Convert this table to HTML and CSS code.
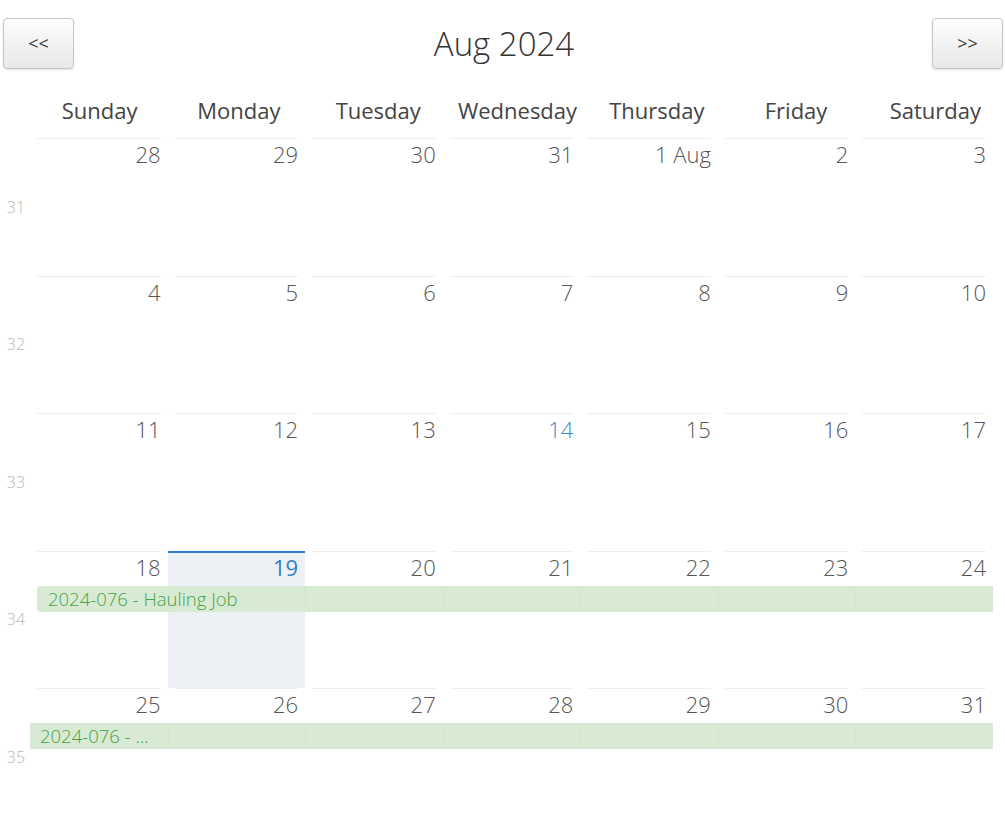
FILE: index.html
```html
<!DOCTYPE html>
<html lang="en">
<head>
<meta charset="utf-8">
<title>Aug 2024</title>
<link rel="stylesheet" href="styles.css">
</head>
<body>
<div class="toolbar">
  <button class="nav-btn">&lt;&lt;</button>
  <h1 class="title">Aug 2024</h1>
  <button class="nav-btn">&gt;&gt;</button>
</div>
<div class="dow">
  <div></div>
  <div>Sunday</div><div>Monday</div><div>Tuesday</div><div>Wednesday</div><div>Thursday</div><div>Friday</div><div>Saturday</div>
</div>
<div class="calendar">
  <div class="week">
    <div class="wk">31</div>
    <div class="day"><div class="num">28</div></div>
    <div class="day"><div class="num">29</div></div>
    <div class="day"><div class="num">30</div></div>
    <div class="day"><div class="num">31</div></div>
    <div class="day"><div class="num">1 Aug</div></div>
    <div class="day"><div class="num">2</div></div>
    <div class="day"><div class="num">3</div></div>
  </div>

  <div class="week">
    <div class="wk">32</div>
    <div class="day"><div class="num">4</div></div>
    <div class="day"><div class="num">5</div></div>
    <div class="day"><div class="num">6</div></div>
    <div class="day"><div class="num">7</div></div>
    <div class="day"><div class="num">8</div></div>
    <div class="day"><div class="num">9</div></div>
    <div class="day"><div class="num">10</div></div>
  </div>

  <div class="week">
    <div class="wk">33</div>
    <div class="day"><div class="num">11</div></div>
    <div class="day"><div class="num">12</div></div>
    <div class="day"><div class="num">13</div></div>
    <div class="day"><div class="num today">14</div></div>
    <div class="day"><div class="num">15</div></div>
    <div class="day"><div class="num">16</div></div>
    <div class="day"><div class="num">17</div></div>
  </div>

  <div class="week">
    <div class="wk">34</div>
    <div class="day"><div class="num">18</div></div>
    <div class="day selected"><div class="num">19</div></div>
    <div class="day"><div class="num">20</div></div>
    <div class="day"><div class="num">21</div></div>
    <div class="day"><div class="num">22</div></div>
    <div class="day"><div class="num">23</div></div>
    <div class="day"><div class="num">24</div></div>
    <div class="event">
      <div class="seg start"></div><div class="seg"></div><div class="seg"></div><div class="seg"></div><div class="seg"></div><div class="seg"></div><div class="seg"></div>
      <div class="label label-start">2024-076 - Hauling Job</div>
    </div>
  </div>

  <div class="week">
    <div class="wk">35</div>
    <div class="day"><div class="num">25</div></div>
    <div class="day"><div class="num">26</div></div>
    <div class="day"><div class="num">27</div></div>
    <div class="day"><div class="num">28</div></div>
    <div class="day"><div class="num">29</div></div>
    <div class="day"><div class="num">30</div></div>
    <div class="day"><div class="num">31</div></div>
    <div class="event">
      <div class="seg"></div><div class="seg"></div><div class="seg"></div><div class="seg"></div><div class="seg"></div><div class="seg"></div><div class="seg"></div>
      <div class="label label-cont">2024-076 - ...</div>
    </div>
  </div>
</div>
</body>
</html>
```

FILE: styles.css
```css
html, body {
  margin: 0;
  padding: 0;
  background: #fff;
}
body {
  font-family: "Open Sans", "Liberation Sans", sans-serif;
  color: #333;
  width: 1005px;
}
.toolbar {
  display: flex;
  align-items: center;
  justify-content: space-between;
  padding: 18px 2px 0 3px;
  height: 50px;
}
.nav-btn {
  width: 71px;
  height: 51px;
  font-family: "Open Sans", "Liberation Sans", sans-serif;
  font-size: 18px;
  color: #333;
  background: linear-gradient(#fdfdfd, #e8e8e8);
  border: 1px solid #c6c6c6;
  border-radius: 4px;
  box-shadow: 0 1px 2px rgba(0, 0, 0, 0.12);
  padding: 0;
}
.title {
  margin: 0;
  font-size: 33px;
  font-weight: 300;
  color: #333;
  padding-left: 2px;
}
.dow {
  display: grid;
  grid-template-columns: 30px repeat(7, 1fr);
  width: 1005px;
  height: 70px;
  box-sizing: border-box;
  align-items: end;
  padding-bottom: 13px;
  font-size: 22px;
  color: #444;
  text-align: center;
}
.calendar {
  width: 993px;
}
.week {
  display: grid;
  grid-template-columns: 30px repeat(7, 1fr);
  grid-template-rows: 137.5px;
}
.wk {
  grid-row: 1;
  grid-column: 1;
  align-self: center;
  text-align: center;
  padding-left: 2px;
  font-size: 16px;
  font-weight: 300;
  color: #b8b8b8;
}
.day {
  grid-row: 1;
  padding: 0 7px;
  min-width: 0;
}
.day:nth-child(2) { grid-column: 2; }
.day:nth-child(3) { grid-column: 3; }
.day:nth-child(4) { grid-column: 4; }
.day:nth-child(5) { grid-column: 5; }
.day:nth-child(6) { grid-column: 6; }
.day:nth-child(7) { grid-column: 7; }
.day:nth-child(8) { grid-column: 8; }
.num {
  border-top: 1px solid #eeeeee;
  text-align: right;
  font-size: 22px;
  font-weight: 300;
  color: #555;
}
.num.today {
  color: #3c87cc;
}
.day.selected {
  background: #edf1f5;
  border-top: 2px solid #2f7fcb;
}
.day.selected .num {
  border-top: none;
  color: #2f7fcb;
  font-weight: 400;
  margin-top: -1px;
}
.event {
  grid-row: 1;
  grid-column: 2 / 9;
  align-self: start;
  margin-top: 35px;
  height: 26px;
  display: grid;
  grid-template-columns: repeat(7, 1fr);
  grid-template-rows: 26px;
}
.seg {
  grid-row: 1;
  background: #d9ead4;
  border-left: 1px solid #d3e5cd;
}
.seg:nth-child(1) { grid-column: 1; border-left: none; }
.seg:nth-child(2) { grid-column: 2; }
.seg:nth-child(3) { grid-column: 3; }
.seg:nth-child(4) { grid-column: 4; }
.seg:nth-child(5) { grid-column: 5; }
.seg:nth-child(6) { grid-column: 6; }
.seg:nth-child(7) { grid-column: 7; }
.seg.start {
  margin-left: 7px;
  border-radius: 4px 0 0 4px;
}
.label {
  grid-row: 1;
  grid-column: 1 / -1;
  line-height: 26px;
  font-size: 18.5px;
  font-weight: 300;
  color: #47a341;
  white-space: nowrap;
}
.label-start {
  padding-left: 18px;
}
.label-cont {
  padding-left: 10px;
}
```
